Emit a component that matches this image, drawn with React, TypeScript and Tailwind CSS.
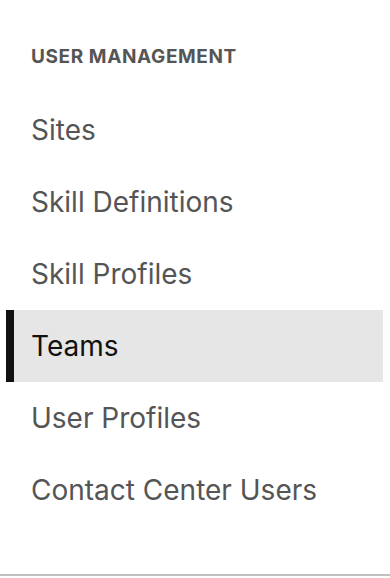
const items = ["Sites", "Skill Definitions", "Skill Profiles", "Teams", "User Profiles", "Contact Center Users"]

export default function App() {
    const active = "Teams"
    return (
        <div className="flex h-[578px] w-[390px] flex-col bg-white font-['Inter',sans-serif]">
            <nav className="flex-1">
                <h2 className="px-[31px] pt-[44px] pb-[24px] text-[19px] font-bold uppercase leading-[26px] tracking-[0.6px] text-[#555555]">
                    User Management
                </h2>
                <ul className="pl-[6px] pr-[7px]">
                    {items.map((item) => (
                        <li
                            key={item}
                            className={
                                item === active
                                    ? "flex h-[72px] items-center border-l-[8px] border-[#111111] bg-[#e6e6e6] pl-[17px] text-[28px] text-[#111111]"
                                    : "flex h-[72px] items-center pl-[25px] text-[28px] text-[#555555]"
                            }
                        >
                            {item}
                        </li>
                    ))}
                </ul>
            </nav>
            <div className="mb-[2px] h-[2px] bg-[#c0c0c0]" />
        </div>
    )
}
